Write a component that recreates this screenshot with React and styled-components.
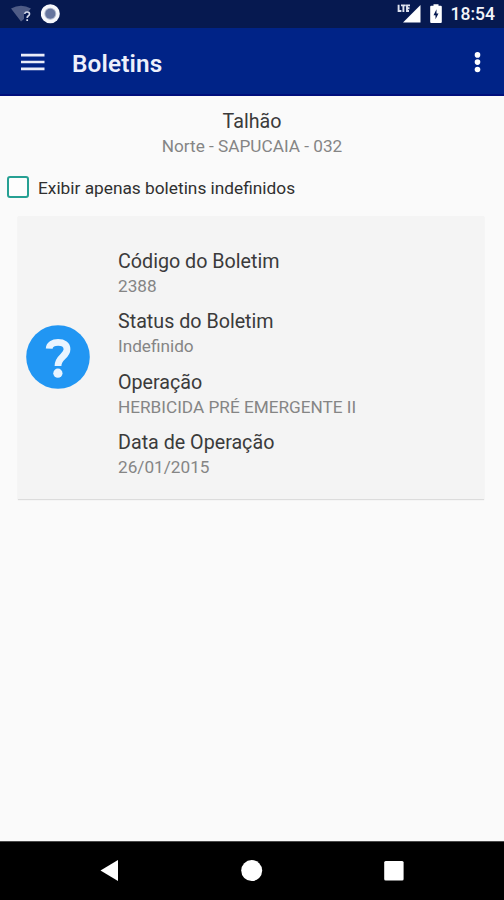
import React from "react";
import styled, { createGlobalStyle } from "styled-components";

const GlobalStyle = createGlobalStyle`
  * { box-sizing: border-box; }
  body { margin: 0; background: #fafafa; font-family: Roboto, "Liberation Sans", sans-serif; }
`;

const Screen = styled.div`
  width: 504px;
  height: 900px;
  display: flex;
  flex-direction: column;
  background: #fafafa;
  overflow: hidden;
`;

const StatusBar = styled.div`
  height: 28px;
  flex: none;
  display: flex;
  align-items: center;
  justify-content: space-between;
  padding: 0 9px 0 10px;
  background: #061950;
  color: #f3f4fa;
`;

const StatusGroup = styled.div`
  display: flex;
  align-items: center;
  gap: 9px;
  margin-top: -1px;
`;

const Clock = styled.span`
  font-size: 17.5px;
  font-weight: 500;
  line-height: 28px;
`;

const AppBar = styled.header`
  height: 68px;
  flex: none;
  display: flex;
  align-items: center;
  padding: 0 20px 0 21px;
  background: #002387;
  border-bottom: 2px solid #000f7c;
`;

const Title = styled.h1`
  flex: 1;
  margin: 6px 0 0 27px;
  font-size: 24.3px;
  line-height: 30px;
  font-weight: 600;
  letter-spacing: 0.15px;
  color: #eef0fb;
`;

const IconButton = styled.button`
  display: flex;
  padding: 0;
  margin: 2px 0 0;
  border: 0;
  background: none;
`;

const Content = styled.main`
  flex: 1;
  display: flex;
  flex-direction: column;
`;

const PlotHeading = styled.section`
  padding-top: 13px;
  text-align: center;
`;

const Label = styled.div`
  font-size: 19.7px;
  line-height: 26px;
  color: #3b3b3b;
`;

const Value = styled.div`
  padding-bottom: 2px;
  font-size: 17.2px;
  line-height: 22px;
  color: #858585;
`;

const FilterRow = styled.label`
  display: flex;
  align-items: center;
  gap: 9px;
  height: 26px;
  margin: 15px 0 0 7px;
  font-size: 17.3px;
  color: #303030;
`;

const CheckBox = styled.span`
  width: 22px;
  height: 22px;
  border: 2px solid #26a093;
  border-radius: 3px;
  background: #fdfdfd;
`;

const FilterText = styled.span`
  padding-top: 1px;
`;

const Card = styled.article`
  display: flex;
  align-items: center;
  height: 283px;
  margin: 16px 20px 0 18px;
  padding-left: 8px;
  background: #f4f4f4;
  box-shadow: 0 1px 1px #dcdcdc;
`;

const CardBadge = styled.div`
  display: flex;
  padding-bottom: 1px;
`;

const Fields = styled.div`
  display: flex;
  flex-direction: column;
  gap: 10.5px;
  margin: 14px 0 0 28px;
`;

const NavBar = styled.nav`
  height: 59px;
  flex: none;
  display: flex;
  align-items: center;
  justify-content: space-between;
  padding: 0 100px;
  background: #000;
  border-top: 1px solid #4a4a4a;
`;

const fields = [
  { label: "Código do Boletim", value: "2388" },
  { label: "Status do Boletim", value: "Indefinido" },
  { label: "Operação", value: "HERBICIDA PRÉ EMERGENTE II" },
  { label: "Data de Operação", value: "26/01/2015" },
];

const WifiIcon = () => (
  <svg width="22" height="20" viewBox="0 0 22 20">
    <path d="M1 4.5Q11-1 21 4.5L18 8H14V15L11 17.5Z" fill="#4f5c86" />
    <path d="M14.6 9.8Q14.9 8 17.2 8T19.5 9.9Q19.5 11.2 18.2 12 17.2 12.6 17.2 14M17.2 15.2V17" fill="none" stroke="#d5daea" strokeWidth="1.7" />
  </svg>
);

const RecordIcon = () => (
  <svg width="20" height="20" viewBox="0 0 20 20">
    <circle cx="9.3" cy="9.7" r="9.5" fill="#f7f8fc" />
    <circle cx="9.3" cy="9.7" r="6" fill="#b2bacf" />
    <circle cx="9.3" cy="9.7" r="5" fill="#66759e" />
  </svg>
);

const SignalIcon = () => (
  <svg width="24" height="20" viewBox="0 0 24 20">
    <path d="M23.5 1V18.5H6Z" fill="#fff" />
    <path d="M1.6 .8V7H4.4M4 1.4H8.8M6.4 1.4V8M13 1.4H10V7H12M10 4.2H12.5" fill="none" stroke="#dfe3f0" strokeWidth="1.9" />
  </svg>
);

const BatteryIcon = () => (
  <svg width="12" height="20" viewBox="0 0 12 20">
    <path d="M3.5 .3H8.5V1.8H10.8Q11.8 1.8 11.8 2.8V18Q11.8 19 10.8 19H1.2Q.2 19 .2 18V2.8Q.2 1.8 1.2 1.8H3.5Z" fill="#fff" />
    <path d="M6.5 5.2V9.5H8.5L5.5 15.2V11.2H3.5Z" fill="#061950" />
  </svg>
);

const MenuIcon = () => (
  <svg width="24" height="18" viewBox="0 0 24 18">
    <path d="M0 2.2H23.5M0 9H23.5M0 15.8H23.5" stroke="#e9ecf9" strokeWidth="2.7" />
  </svg>
);

const MoreIcon = () => (
  <svg width="12" height="24" viewBox="0 0 12 24">
    <circle cx="5.5" cy="4.9" r="2.8" fill="#fff" />
    <circle cx="5.5" cy="12.1" r="2.8" fill="#fff" />
    <circle cx="5.5" cy="19.5" r="2.8" fill="#fff" />
  </svg>
);

const UnknownIcon = () => (
  <svg width="64" height="64" viewBox="0 0 64 64">
    <circle cx="32" cy="32" r="31.8" fill="#2196f3" />
    <path d="M23.2 23.6C23.4 19.6 27 17.4 32.1 17.4C37.6 17.4 41 19.8 41 24.2C41 31.5 32 31.8 32 41" fill="none" stroke="#e8f4ff" strokeWidth="6.8" />
    <circle cx="31.9" cy="48.2" r="4.6" fill="#e8f4ff" />
  </svg>
);

const BackIcon = () => (
  <svg width="19" height="22" viewBox="0 0 19 22">
    <path d="M.5 10.5 18 0V21Z" fill="#fff" />
  </svg>
);

const HomeIcon = () => (
  <svg width="22" height="22" viewBox="0 0 22 22">
    <circle cx="10.7" cy="10.6" r="10.5" fill="#fff" />
  </svg>
);

const RecentsIcon = () => (
  <svg width="20" height="20" viewBox="0 0 20 20">
    <rect x=".2" y="0" width="19.4" height="19.4" rx="1.5" fill="#fff" />
  </svg>
);

export default function App() {
  return (
    <Screen>
      <GlobalStyle />
      <StatusBar>
        <StatusGroup>
          <WifiIcon />
          <RecordIcon />
        </StatusGroup>
        <StatusGroup>
          <SignalIcon />
          <BatteryIcon />
          <Clock>18:54</Clock>
        </StatusGroup>
      </StatusBar>
      <AppBar>
        <IconButton aria-label="Menu"><MenuIcon /></IconButton>
        <Title>Boletins</Title>
        <IconButton aria-label="Mais opções"><MoreIcon /></IconButton>
      </AppBar>
      <Content>
        <PlotHeading>
          <Label>Talhão</Label>
          <Value>Norte - SAPUCAIA - 032</Value>
        </PlotHeading>
        <FilterRow>
          <CheckBox />
          <FilterText>Exibir apenas boletins indefinidos</FilterText>
        </FilterRow>
        <Card>
          <CardBadge><UnknownIcon /></CardBadge>
          <Fields>
            {fields.map((f) => (
              <div key={f.label}>
                <Label>{f.label}</Label>
                <Value>{f.value}</Value>
              </div>
            ))}
          </Fields>
        </Card>
      </Content>
      <NavBar>
        <BackIcon />
        <HomeIcon />
        <RecentsIcon />
      </NavBar>
    </Screen>
  );
}
